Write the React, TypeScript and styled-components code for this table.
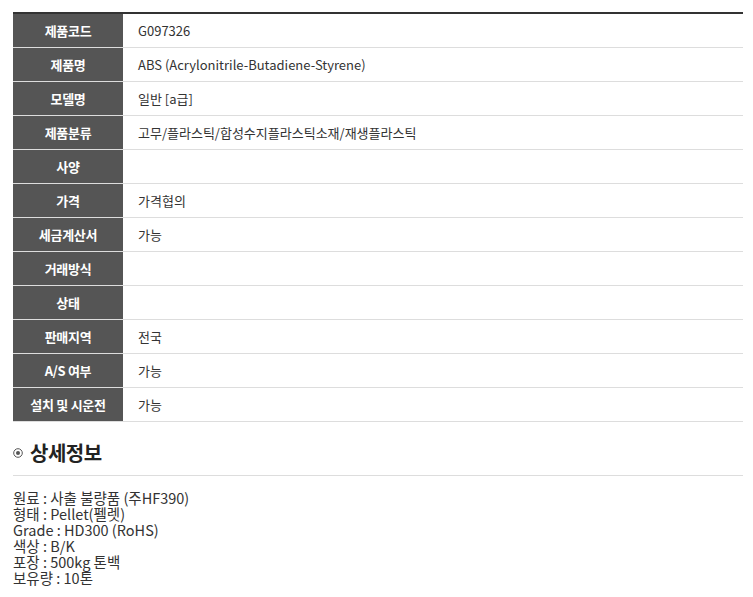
import React from "react";
import styled, { createGlobalStyle } from "styled-components";

interface SpecRow {
	label: string;
	value: string;
}

const rows: SpecRow[] = [
	{ label: "제품코드", value: "G097326" },
	{ label: "제품명", value: "ABS (Acrylonitrile-Butadiene-Styrene)" },
	{ label: "모델명", value: "일반 [a급]" },
	{ label: "제품분류", value: "고무/플라스틱/합성수지플라스틱소재/재생플라스틱" },
	{ label: "사양", value: "" },
	{ label: "가격", value: "가격협의" },
	{ label: "세금계산서", value: "가능" },
	{ label: "거래방식", value: "" },
	{ label: "상태", value: "" },
	{ label: "판매지역", value: "전국" },
	{ label: "A/S 여부", value: "가능" },
	{ label: "설치 및 시운전", value: "가능" },
];

const details = [
	"원료 : 사출 불량품 (주HF390)",
	"형태 : Pellet(펠렛)",
	"Grade : HD300 (RoHS)",
	"색상 : B/K",
	"포장 : 500kg 톤백",
	"보유량 : 10톤",
];

const GlobalStyle = createGlobalStyle`
	html, body {
		margin: 0;
		padding: 0;
		background: #ffffff;
	}
	body {
		font-family: "Noto Sans CJK KR", "Noto Sans", sans-serif;
		color: #333333;
	}
`;

const Page = styled.div`
	width: 730px;
	padding: 12px 0 0 13px;
`;

const SpecTable = styled.div`
	border-top: 2px solid #333333;
`;

const Row = styled.div`
	display: grid;
	grid-template-columns: 110px 1fr;
	height: 33px;
	border-bottom: 1px solid #dddddd;
`;

const Label = styled.div`
	display: flex;
	align-items: center;
	justify-content: center;
	background: #555555;
	color: #ffffff;
	font-size: 13px;
	font-weight: 700;
	letter-spacing: -0.3px;
`;

const Value = styled.div`
	display: flex;
	align-items: center;
	padding-left: 15px;
	font-size: 13px;
	color: #333333;
`;

const Heading = styled.h3`
	display: flex;
	align-items: center;
	gap: 7px;
	margin: 13px 0 0;
	height: 35px;
	padding-bottom: 5px;
	border-bottom: 1px solid #dddddd;
	font-size: 20px;
	font-weight: 700;
	color: #222222;
	letter-spacing: -0.5px;
`;

const Details = styled.div`
	margin-top: 14px;
	font-size: 14.5px;
	color: #333333;
`;

const DetailLine = styled.div`
	height: 16px;
	line-height: 16px;
	white-space: nowrap;
`;

const CircleDot = () => (
	<svg width="10" height="10" viewBox="0 0 10 10">
		<circle cx="5" cy="5" r="4.3" fill="none" stroke="#555" strokeWidth="1" />
		<circle cx="5" cy="5" r="2" fill="#555" />
	</svg>
);

const App: React.FC = () => {
	return (
		<Page>
			<GlobalStyle />
			<SpecTable>
				{rows.map((row) => (
					<Row key={row.label}>
						<Label>{row.label}</Label>
						<Value>{row.value}</Value>
					</Row>
				))}
			</SpecTable>
			<Heading>
				<CircleDot />
				상세정보
			</Heading>
			<Details>
				{details.map((line) => (
					<DetailLine key={line}>{line}</DetailLine>
				))}
			</Details>
		</Page>
	);
};

export default App;
